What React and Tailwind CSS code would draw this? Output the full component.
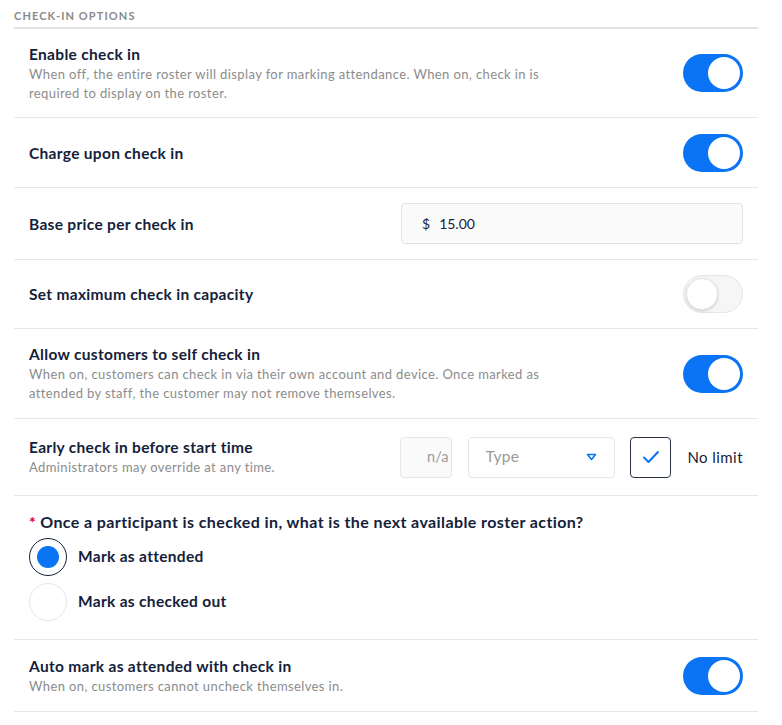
import { useState } from "react";

function Toggle({ on }) {
  return (
    <div
      className={
        "w-[60px] h-[38px] rounded-full flex shrink-0 " +
        (on
          ? "bg-[#0a74f5] justify-end p-[3px]"
          : "bg-[#f6f6f6] border border-[#e6e6e6] justify-start p-[2px]")
      }
    >
      <div
        className={
          "w-[32px] h-[32px] rounded-full bg-white " +
          (on ? "" : "shadow-[0_1px_3px_rgba(0,0,0,0.18)] border border-[#e6e6e6]")
        }
      />
    </div>
  );
}

function Row({ title, desc, right, className = "" }) {
  return (
    <div className={"flex items-center justify-between border-b border-[#e6e6e6] px-[15px] " + className}>
      <div>
        <div className="text-[15.5px] font-bold tracking-[0.02em] text-[#14213a] leading-[20px]">{title}</div>
        {desc && (
          <div className="text-[13px] tracking-[0.03em] text-[#8c8c8c] leading-[19px] mt-[1px]">{desc}</div>
        )}
      </div>
      {right}
    </div>
  );
}

export default function App() {
  const [choice, setChoice] = useState("attended");
  return (
    <div className="w-[782px] h-[725px] bg-white" style={{ fontFamily: "Lato, 'Open Sans', sans-serif" }}>
      <div className="ml-[14px] w-[744px]">
        <div className="h-[29px] pt-[9px] border-b-2 border-[#e3e3e3] text-[11px] font-bold tracking-[0.1em] text-[#8a8a8a] leading-[14px]">
          CHECK-IN OPTIONS
        </div>
        <Row
          className="h-[89px]"
          title="Enable check in"
          desc={
            <>
              When off, the entire roster will display for marking attendance. When on, check in is
              <br />
              required to display on the roster.
            </>
          }
          right={<Toggle on />}
        />
        <Row className="h-[70px]" title="Charge upon check in" right={<Toggle on />} />
        <Row
          className="h-[72px]"
          title="Base price per check in"
          right={
            <div className="w-[342px] h-[41px] rounded-[4px] border border-[#e3e3e3] bg-[#fafafa] flex items-center pl-[20px] text-[14px] text-[#14213a]">
              <span>$</span>
              <span className="ml-[9px]">15.00</span>
            </div>
          }
        />
        <Row className="h-[69px]" title="Set maximum check in capacity" right={<Toggle />} />
        <Row
          className="h-[90px]"
          title="Allow customers to self check in"
          desc={
            <>
              When on, customers can check in via their own account and device. Once marked as
              <br />
              attended by staff, the customer may not remove themselves.
            </>
          }
          right={<Toggle on />}
        />
        <Row
          className="h-[77px]"
          title="Early check in before start time"
          desc="Administrators may override at any time."
          right={
            <div className="flex items-center">
              <div className="w-[52px] h-[41px] rounded-[4px] border border-[#e6e6e6] bg-[#fafafa] flex items-center justify-end pr-[3px] text-[14.5px] text-[#9a9a9a] overflow-hidden">
                n/a
              </div>
              <div className="ml-[16px] w-[147px] h-[41px] rounded-[4px] border border-[#e6e6e6] bg-white flex items-center justify-between pl-[16px] pr-[17px] text-[15.5px] tracking-[0.02em] text-[#9a9a9a]">
                <span>Type</span>
                <svg width="11" height="8" viewBox="0 0 11 8">
                  <path d="M1.5 1.5 H9.5 L5.5 6.5 Z" fill="none" stroke="#0a74f5" strokeWidth="1.6" strokeLinejoin="round" />
                </svg>
              </div>
              <div className="ml-[15px] w-[41px] h-[41px] rounded-[4px] border-[1.5px] border-[#2b3445] flex items-center justify-center">
                <svg width="18" height="14" viewBox="0 0 18 14">
                  <path d="M2 7.5 L6.5 12 L16 2" fill="none" stroke="#0a74f5" strokeWidth="2" strokeLinecap="round" strokeLinejoin="round" />
                </svg>
              </div>
              <span className="ml-[16px] text-[15px] tracking-[0.03em] text-[#14213a]">No limit</span>
            </div>
          }
        />
        <div className="h-[144px] border-b border-[#e6e6e6] pl-[15px] pt-[16px]">
          <div className="text-[16px] font-bold tracking-[0.025em] text-[#14213a] leading-[20px]">
            <span className="text-[#d0021b] mr-[4px]">*</span>
            Once a participant is checked in, what is the next available roster action?
          </div>
          <div className="mt-[6px] flex flex-col gap-[7px]">
            {[
              ["attended", "Mark as attended"],
              ["out", "Mark as checked out"],
            ].map(([k, label]) => (
              <div key={k} className="flex items-center cursor-pointer" onClick={() => setChoice(k)}>
                <div
                  className={
                    "w-[38px] h-[38px] rounded-full flex items-center justify-center " +
                    (choice === k ? "border-[1.5px] border-[#14213a]" : "border border-[#e6e6e6]")
                  }
                >
                  {choice === k && <div className="w-[22px] h-[22px] rounded-full bg-[#0a74f5]" />}
                </div>
                <span className="ml-[11px] text-[15.5px] font-bold tracking-[0.02em] text-[#14213a]">{label}</span>
              </div>
            ))}
          </div>
        </div>
        <Row
          className="h-[72px]"
          title="Auto mark as attended with check in"
          desc="When on, customers cannot uncheck themselves in."
          right={<Toggle on />}
        />
      </div>
    </div>
  );
}
